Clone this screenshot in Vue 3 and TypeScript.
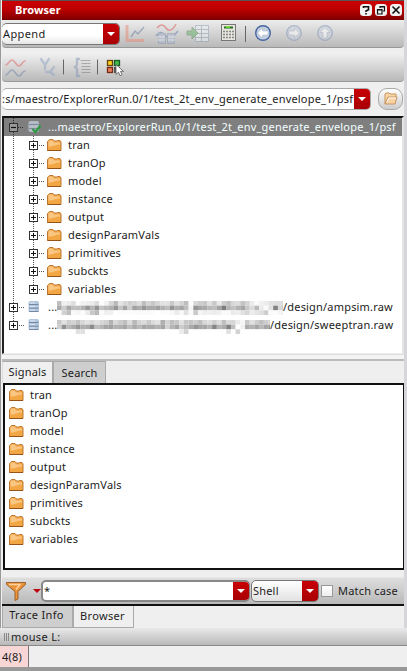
<script setup lang="ts">
import { defineComponent, h } from 'vue'

const folders: string[] = ['tran', 'tranOp', 'model', 'instance', 'output', 'designParamVals', 'primitives', 'subckts', 'variables']

// Each row's hidden directory is drawn as three lines of grey cells.
const rows = [
  {
    suffix: '/design/ampsim.raw',
    top: 3,
    width: 226,
    shades: [
      [190,240,235,222,252,240,238,236,220,252,242,215,185,228,215,205,210,222,190,212,200,215,225,225,202,225,212,190,252,215,205,200,225,200,232,205,190,215,220,196,212,235,250,240,236,225,222,222,190],
      [170,205,168,190,190,178,150,182,148,195,185,176,150,196,165,205,160,172,150,168,170,160,178,190,150,175,165,190,245,150,165,170,185,190,165,125,180,195,178,165,200,220,185,235,250,225,130,215,165],
      [250,208,190,250,245,252,235,200,185,250,240,240,255,252,252,252,252,250,250,250,252,255,252,252,248,235,248,225,250,202,245,238,240,236,240,250,250,235,238,225,215,236,228,222,205,250,252,245,230],
    ],
  },
  {
    suffix: '/design/sweeptran.raw',
    top: 4,
    width: 213,
    shades: [
      [200,225,205,212,195,215,225,215,225,215,208,178,215,202,190,220,184,212,220,202,220,228,175,212,190,200,225,200,196,205,190,215,222,205,222,190,218,215,235,245,200,225,205,190,205,210],
      [205,145,185,170,150,175,170,140,190,180,165,160,178,175,165,190,170,185,165,170,170,178,165,210,180,165,205,190,170,150,165,165,180,135,180,170,130,190,255,240,170,178,165,185,165,150],
      [255,255,255,255,225,225,255,255,255,255,255,255,255,255,255,255,255,255,255,255,255,255,255,255,255,255,236,210,255,255,255,255,255,255,255,255,225,255,210,255,255,255,255,255,255,255],
    ],
  },
]

const Folder = defineComponent({
  setup: () => () => h('svg', { width: 15, height: 14, viewBox: '0 0 15 14' }, [
    h('path', { d: 'M.5 12.500V3.500L1.500 2.500L2.500 1.500H6L7.500 3H9.500L10.500 2.500H13L14 4V12.500z', fill: '#f3a744', stroke: '#bd7630', 'stroke-width': '1' }),
    h('path', { d: 'M1.500 7.500V3.500L3 2.500H5.500L7 4.500H13V6.500C9 6 6 9 1.500 8.500z', fill: '#f9c684' }),
    h('path', { d: 'M.5 12.500H14', stroke: '#95531a' }),
  ]),
})
</script>

<template>
  <main class="window">
    <section class="dock">
      <header class="title"><b>Browser</b>
        <svg class="controls" width="44" height="14" viewBox="0 0 44 14">
          <g fill="#f1f1f1"><rect x="0" y="1" width="12" height="12" rx="3.5"/><rect x="15" y="1" width="12" height="12" rx="3.5"/><rect x="30" y="1" width="12" height="12" rx="3.5"/></g>
          <g fill="none" stroke="#111" stroke-width="1.6"><path d="M3.500 5V3.700h5v3L6 8v1M6 10v1.600M32.500 3.500l7 7M39.500 3.500l-7 7"/><path stroke-width="1.200" d="M20 5V3.500h4.500V8H23M17.500 6.500H22V11h-4.500zM17.500 7H22M20 4h4.500"/></g>
        </svg>
      </header>
      <div class="bar bar-one">
        <div class="combo append"><span>Append</span><i class="drop"></i></div>
        <svg class="tools" width="220" height="26" viewBox="0 0 220 26">
          <g opacity=".5">
            <path d="M7 4v15.500h17" fill="none" stroke="#e98a78" stroke-width="3"/><path d="M11 16l4-6 3 3 6-7" fill="none" stroke="#657e9f" stroke-width="1.400"/>
            <path d="M37 7c4-5 7-3 9 0s6 4 10-4" fill="none" stroke="#db5350" stroke-width="1.500"/><path d="M36 15c4-5 7-4 10 0s7 1 12-5" fill="none" stroke="#607db0" stroke-width="1.500"/>
            <path d="M38.500 12.500h7v10h-7zm9 0h7v10h-7z" fill="#a8b9d1" stroke="#8292aa"/><path d="M38 16h7m-7 3h7m3-3h7m-7 3h7" stroke="#fff"/>
            <path d="M75.500 4.500h13v16h-13zM75 8.500h13m-13 4h13m-13 4h13M81.500 4v17" fill="#edf3f6" stroke="#91a0ad"/><path d="M67 10h5V6l6 6-6 6v-4h-5z" fill="#60b060" stroke="#548955"/>
          </g>
          <g><rect x="101.500" y="3.500" width="14" height="16" fill="#e6e6de" stroke="#777"/><path d="M104 6.500h9" stroke="#266d21" stroke-width="2"/><path d="M106 6h4" stroke="#75ed31" stroke-width="1.500"/><path d="M103 10.500h11M103 13.500h11M103 16.500h11" stroke="#888" stroke-width="1.500" stroke-dasharray="2 1"/></g>
          <path d="M125.500 5v16" stroke="#666"/>
          <circle cx="143" cy="12" r="7.300" fill="#c3cfdf" stroke="#4766a0" stroke-width="1.400"/><path d="M137.500 12l5-5v3h5.500v4h-5.500v3z" fill="#fff" stroke="#a3b1c9" stroke-width=".5"/>
          <g opacity=".5" fill="#c9d2df" stroke="#7c90b4" stroke-width="1.300"><circle cx="174" cy="12" r="7.300"/><path d="M179.500 12l-5-5v3H169v4h5.500v3z" fill="#fff" stroke-width=".5"/><circle cx="205" cy="12" r="7.300"/><path d="M205 6.500l5 5h-3v5.500h-4v-5.500h-3z" fill="#fff" stroke-width=".5"/></g>
        </svg>
      </div>
      <div class="bar bar-two">
        <svg width="130" height="26" viewBox="0 0 130 26">
          <g fill="none" stroke-linecap="round"><g opacity=".5" stroke-width="1.500"><path d="M4 10c2 0 3-5 6-5s4 6 7 6 3-5 6-5" stroke="#df6060"/><path d="M4 20c2 0 3-5 6-5s4 6 7 6 3-5 6-5" stroke="#7084a9"/><path d="M39 4l4 6 4-6m-4 6v4M52 12l-4 5 4 3m-4-3h-4" stroke="#8fa4c6" stroke-width="2.300"/><path d="M77 4h-2v6l-2 2 2 2v7h2" stroke="#8296b3" stroke-width="2.300"/><path d="M79 5.500h9m-8 3h8m-8 3h8m-8 3h8m-8 3h8" stroke="#777" stroke-width="1.200"/></g><path d="M61.500 5v14M95.500 5v14" stroke="#666"/></g>
          <rect x="105.500" y="5.500" width="5" height="5" fill="#ffd31e" stroke="#64430f" stroke-width="1.300"/><rect x="112.500" y="5.500" width="5" height="5" fill="#44bd4c" stroke="#155f23" stroke-width="1.300"/><rect x="105.500" y="12.500" width="5" height="5" fill="#ea7c5b" stroke="#742b18" stroke-width="1.300"/><path d="M112 12h6v6h-6z" fill="#555"/><path d="M114 9.500v10l2.500-2.300 1.500 3.500 2-1-1.500-3.300h3z" fill="#fff" stroke="#555" stroke-width=".8"/>
        </svg>
      </div>
      <div class="location">
        <div class="combo path"><span>:s/maestro/ExplorerRun.0/1/test_2t_env_generate_envelope_1/psf</span><i class="drop"></i></div>
        <button class="open" aria-label="Open"><svg width="16" height="14" viewBox="0 0 16 14"><path d="M2 12V2l1-1h3l1 1h6v3" fill="#fbd6a4" stroke="#c8955d"/><path d="M2 12l3-7h9l-2 7z" fill="#f9d2a1" stroke="#c59464"/><path d="M4 10l2-4h7" fill="none" stroke="#fff"/></svg></button>
      </div>
      <div class="tree">
        <div class="root selected">
          <svg width="42" height="18" viewBox="0 0 42 18"><path d="M7.500 0v18M12 9.500h6" stroke="#333" stroke-dasharray="1 1"/><rect x="3.500" y="5.500" width="8" height="8" fill="#999" stroke="#333"/><path d="M5 9.500h5" stroke="#111" stroke-width="1.200"/><rect x="22.500" y="3" width="10.500" height="11" rx="2" fill="#b4bdc6"/><path d="M23 6.500h10m-10 4h10" stroke="#7c8b9b"/><path d="M26.500 11l3 3 5-6.500" fill="none" stroke="#2f9a43" stroke-width="2.300"/></svg>
          <span>...maestro/ExplorerRun.0/1/test_2t_env_generate_envelope_1/psf</span>
        </div>
        <div class="child" v-for="(name, i) in folders" :key="name">
          <svg width="41" height="18" viewBox="0 0 41 18"><path :d="`M7.500 0v18M27.500 0v${i === 8 ? 9 : 18}M33 9.500h6`" stroke="#555" stroke-dasharray="1 1"/><rect x="23.500" y="5.500" width="8" height="8" fill="#fff" stroke="#333"/><path d="M25 9.500h5M27.500 7v5" stroke="#111"/></svg><Folder/><span>{{ name }}</span>
        </div>
        <div class="root" v-for="(row, i) in rows" :key="row.suffix">
          <svg width="42" height="18" viewBox="0 0 42 18"><path :d="`M7.500 0v${i ? 9 : 18}M13 9.500h5`" stroke="#555" stroke-dasharray="1 1"/><rect x="3.500" y="5.500" width="8" height="8" fill="#fff" stroke="#333"/><path d="M5 9.500h5M7.500 7v5" stroke="#111"/><rect x="22.500" y="3" width="10.500" height="11" rx="1.800" fill="#b3c5dc"/><path d="M23 6.500h9.500m-9.500 3.700h9.500m-9.500 3.300h9.500" stroke="#7289a6"/><path d="M24 5h5m-5 3.500h5m-5 3.500h5" stroke="#dce6f1"/></svg>
          <span class="dots">...</span><svg class="mosaic" :width="row.width" height="18"><g v-for="(line, y) in row.shades" :key="y"><rect v-for="(shade, x) in line" :key="x" :x="x * 4.7" :y="y * 4.67 + row.top" width="4.75" height="4.7" :fill="`rgb(${shade},${shade},${shade})`"/></g></svg><span>{{ row.suffix }}</span>
        </div>
      </div>
      <div class="splitter"></div>
      <nav class="tabs upper"><span class="active signals">Signals</span><span class="search">Search</span></nav>
      <div class="signals-list"><div v-for="name in folders" :key="name"><Folder/><span>{{ name }}</span></div></div>
      <div class="filter">
        <svg width="39" height="26" viewBox="0 0 39 26"><path d="M4.500 4.500h19v2L16 13.500v7.500l-3 1.500v-9l-8.500-7z" fill="#e9933b" stroke="#9b622f"/><path d="M7 6.500h11l-4 5" fill="none" stroke="#ffd19b" stroke-width="1.500"/><path d="M31 11h8l-4 4z" fill="#bd0710"/></svg>
        <div class="combo query"><span>*</span><i class="drop"></i></div><div class="combo shell"><span>Shell</span><i class="drop"></i></div><i class="check"></i><span class="match">Match case</span>
      </div>
      <nav class="tabs lower"><span class="trace">Trace Info</span><span class="active browser">Browser</span></nav>
    </section>
    <footer><div class="mouse"><i></i><i></i><i></i><span>mouse L:</span></div><div class="status"><span>4(8)</span></div></footer>
  </main>
</template>

<style>
body { background: #efefef; }
</style>
<style scoped>
* { box-sizing: border-box; }
.window { width: 407px; height: 671px; overflow: hidden; background: #efefef; color: #1c1c1c; font: 11px/18px "Noto Sans", "Open Sans", sans-serif; letter-spacing: .19px; white-space: nowrap; }
.dock { height: 628px; padding-left: 1px; border-left: 1px solid #999; border-right: 3px solid #d5d5da; }
svg { display: block; flex: none; }
.title { height: 20px; padding: 0 0 0 13px; display: flex; align-items: center; justify-content: space-between; border-top: 1px solid #555; border-bottom: 1px solid #770000; background: linear-gradient(#cc0000, #bd0000 45%, #850000); color: white; letter-spacing: .1px; }
.bar { display: flex; align-items: center; border-bottom: 1px solid #999; border-radius: 0 0 4px 4px; background: linear-gradient(#ededed, #d8d8d8 40%, #b9b9b9); }
.bar-one { height: 28px; }
.bar-two { height: 27px; margin-top: 7px; }
.combo { display: flex; align-items: center; overflow: hidden; border: 1px solid #777; border-radius: 5px; background: white; }
.combo > span { flex: 1; overflow: hidden; }
.drop { align-self: stretch; flex: 0 0 16px; display: flex; align-items: center; justify-content: center; background: linear-gradient(#c80004, #a80005); }
.drop::before { content: ''; border: 4px solid transparent; border-top-color: white; border-bottom: 0; }
.append { width: 118px; height: 22px; border-left: 0; letter-spacing: .4px; background: linear-gradient(#fff, #fff 60%, #e5e5e5); }
.append span { padding-left: 1px; }
.location { display: flex; align-items: center; height: 34px; }
.path { width: 369px; height: 22px; border-color: #aaa; border-left: 0; }
.path span { padding-left: 0; }
.open { width: 25px; height: 22px; padding: 0; margin-left: 7px; display: grid; place-items: center; border: 1px solid #aaa; border-radius: 9px; background: linear-gradient(#fff, #ccc); }
.tree { height: 238px; border: 2px solid #222; border-top-color: #111; border-bottom: 1px solid #eee; border-right: 2px solid #e4e4e4; background: white; }
.root, .child { display: flex; height: 18px; align-items: center; padding-left: 2px; }
.child > span { margin-left: 6px; }
.dots { width: 9px; }
.selected { background: #7f7f7f; color: #f4ffff; }
.splitter { height: 7px; border-top: 1px solid #ddd; border-bottom: 2px solid #bbb; background: #f4f4f4; }
.tabs { display: flex; align-items: flex-start; }
.tabs span { display: flex; align-items: center; justify-content: center; border: 1px solid #aaa; background: #cecece; }
.tabs .active { background: #efefef; }
.upper { height: 22px; }
.upper span { height: 22px; border-bottom: 0; }
.signals { width: 51px; padding-bottom: 1px; border-left-color: #ddd !important; }
.search { width: 53px; padding-top: 1px; }
.signals-list { height: 187px; margin-left: 1px; padding: 1px 0 0 4px; border: 2px solid #111; border-right-width: 1px; background: white; }
.signals-list > div { display: flex; align-items: center; height: 18px; }
.signals-list span { margin-left: 6px; }
.filter { height: 36px; padding-top: 7px; display: flex; align-items: center; border-bottom: 2px solid #111; background: linear-gradient(#efefef 0 7px, #dedede 8px, #b9b9b9); }
.query { width: 209px; height: 22px; border: 2px solid #888; border-right-width: 1px; }
.query span { padding-left: 1px; }
.shell { width: 68px; height: 22px; margin-left: 1px; background: linear-gradient(#fff, #e2e2e2); }
.shell span { padding-left: 1px; }
.check { width: 12px; height: 12px; margin-left: 2px; border: 1px solid #999; background: linear-gradient(#fff, #eee); }
.match { margin-left: 5px; }
.lower { height: 22px; letter-spacing: .33px; }
.lower span { height: 22px; border-top: 0; }
.trace { width: 71px; padding: 0 2px 3px 0; }
.browser { width: 61px; padding: 0 2px 1px 0; }
.mouse { height: 18px; padding-left: 4px; display: flex; align-items: center; border-bottom: 1px solid #888; background: linear-gradient(#e9e9e9, #b9b9b9); letter-spacing: .35px; }
.mouse i { width: 1px; height: 8px; margin-right: 1px; background: #888; }
.mouse span { margin-left: 1px; }
.status { height: 25px; border-bottom: 4px solid #999; }
.status span { display: flex; align-items: center; width: 29px; height: 21px; padding: 0 0 0 2px; border-right: 1px solid #777; background: #f9d6d6; }
</style>
